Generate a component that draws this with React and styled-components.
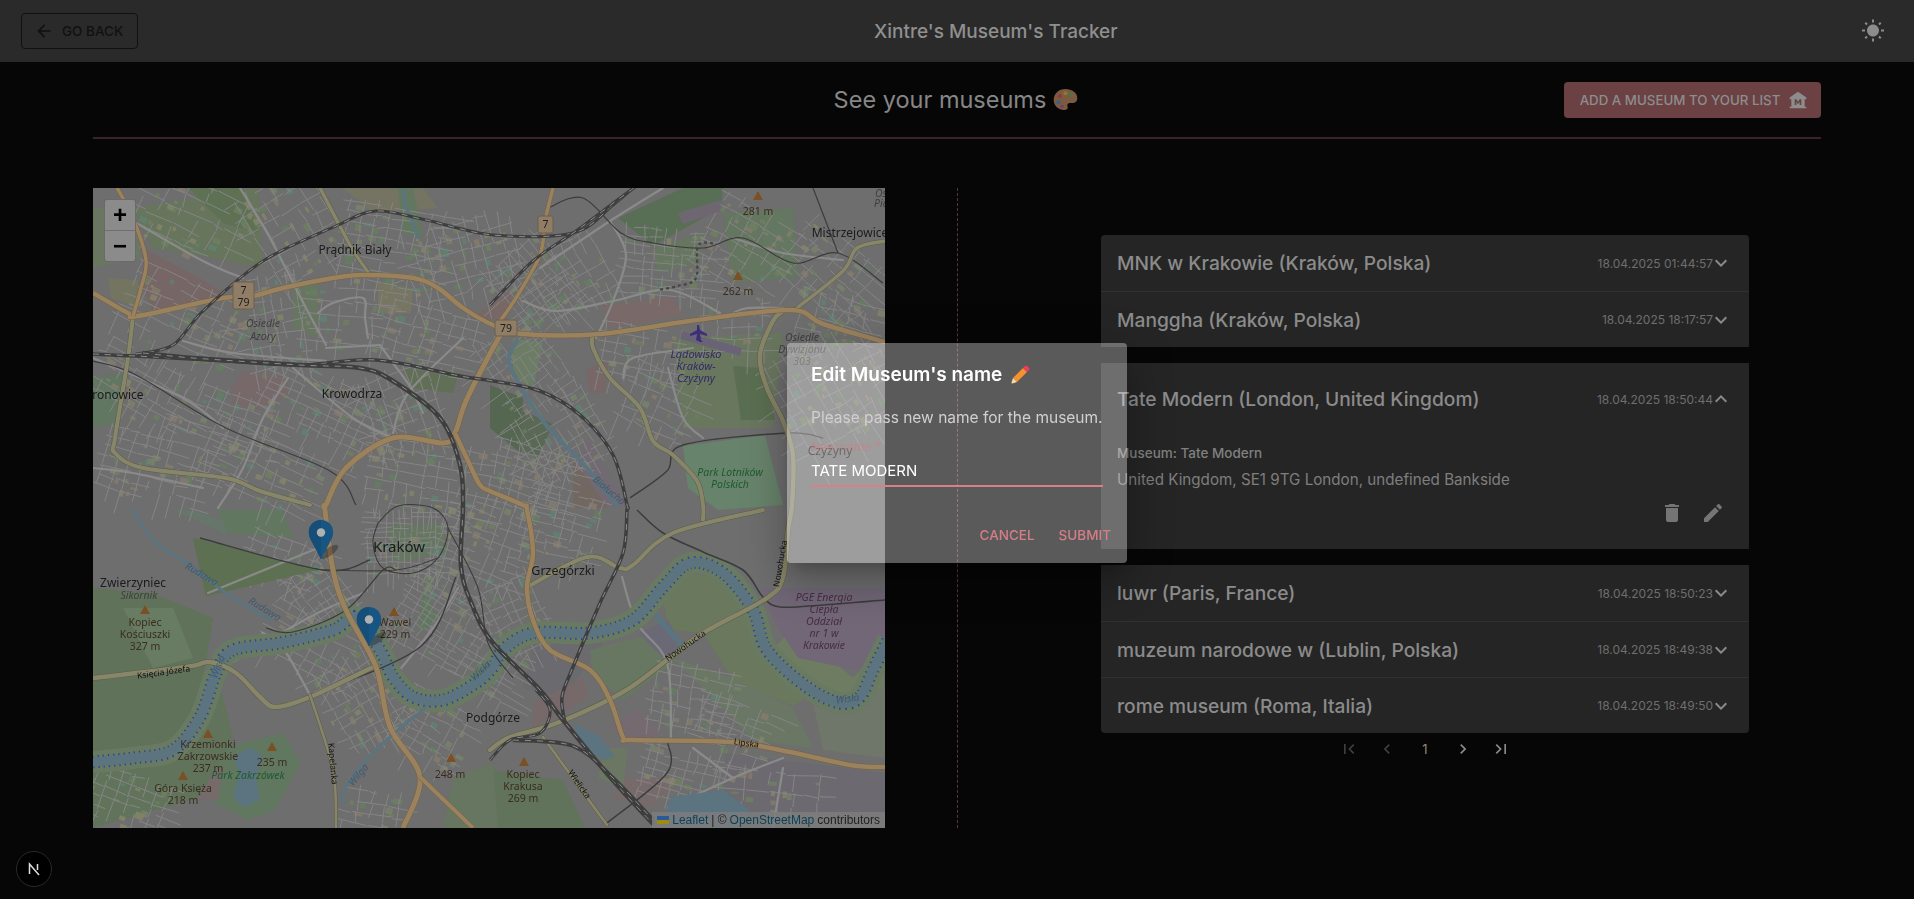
import { useMemo } from "react";
import styled, { createGlobalStyle } from "styled-components";

const GlobalStyle = createGlobalStyle`
  html, body {
    margin: 0;
    padding: 0;
    height: 100%;
    background: #060606;
    overflow: hidden;
    font-family: Inter, "Liberation Sans", sans-serif;
  }
`;

const Page = styled.div`
  width: 1914px;
  height: 899px;
  background: #060606;
`;

const TopBar = styled.header`
  height: 62px;
  background: #2a2a2a;
  display: grid;
  grid-template-columns: 853px auto 1fr;
  align-items: center;
  padding: 0 21px;
`;

const BackButton = styled.button`
  justify-self: start;
  width: 117px;
  height: 36px;
  display: flex;
  align-items: center;
  gap: 8px;
  padding: 0 0 0 12px;
  box-sizing: border-box;
  background: transparent;
  border: 1px solid #111;
  border-radius: 4px;
  color: #111;
  font: 500 13.5px Inter, sans-serif;
`;

const AppTitle = styled.div`
  font-size: 19px;
  font-weight: 500;
  color: #8f8f8f;
`;

const ThemeToggle = styled.div`
  justify-self: end;
  margin-right: 8px;
  display: flex;
  color: #8c8c8c;
`;

const Main = styled.main`
  padding: 0 93px;
`;

const HeadRow = styled.div`
  height: 77px;
  box-sizing: border-box;
  border-bottom: 2px solid #3b2427;
  display: grid;
  grid-template-columns: 1fr auto 1fr;
  align-items: center;
`;

const Heading = styled.h1`
  margin: 0 0 0 -2px;
  display: flex;
  align-items: center;
  gap: 7px;
  font-size: 23.5px;
  font-weight: 400;
  color: #868686;
`;

const AddButton = styled.button`
  justify-self: end;
  width: 257px;
  height: 36px;
  margin-top: 1px;
  display: flex;
  align-items: center;
  justify-content: center;
  gap: 8px;
  border: 0;
  border-radius: 4px;
  background: #6b4144;
  color: #8d8d8d;
  font: 500 13.3px Inter, sans-serif;
  padding: 0 0 0 3px;
`;

const Content = styled.section`
  display: flex;
  margin-top: 49px;
`;

const MapFrame = styled.div`
  position: relative;
  width: 792px;
  height: 640px;
  overflow: hidden;
  background: #6e6e6e;
  flex: none;
`;

const MapSvg = styled.svg`
  display: block;
`;

const ZoomBox = styled.div`
  position: absolute;
  left: 12px;
  top: 12px;
  width: 30px;
  border-radius: 2px;
  overflow: hidden;
  background: #8b8b8b;
  box-shadow: 0 0 0 1px #6a6a6a;
`;

const ZoomBtn = styled.div`
  height: 30px;
  display: flex;
  align-items: center;
  justify-content: center;
  font: 700 24px "Liberation Sans", sans-serif;
  color: #000;
  & + & {
    border-top: 1px solid #6f6f6f;
  }
`;

const Attribution = styled.div`
  position: absolute;
  right: 0;
  bottom: 0;
  height: 16px;
  display: flex;
  align-items: center;
  gap: 3px;
  padding: 0 5px;
  background: rgba(125, 125, 125, 0.85);
  font: 12px "Liberation Sans", sans-serif;
  color: #222;
  white-space: nowrap;
`;

const AttrLink = styled.span`
  color: #0c4258;
`;

const Pin = styled.svg`
  position: absolute;
  left: ${(p) => p.$x - 13}px;
  top: ${(p) => p.$y}px;
  overflow: visible;
`;

const Rule = styled.div`
  width: 0;
  height: 640px;
  margin-left: 72px;
  border-left: 1px dashed #5a343a;
  flex: none;
`;

const ListPanel = styled.div`
  width: 648px;
  margin-left: 143px;
  padding-top: 47px;
  flex: none;
`;

const Group = styled.div`
  background: #252525;
  border-radius: ${(p) => p.$radius};
  & + & {
    margin-top: 16px;
  }
`;

const Row = styled.div`
  height: 56px;
  box-sizing: border-box;
  display: flex;
  align-items: center;
  justify-content: space-between;
  padding: 0 16px;
  & + & {
    border-top: 1px solid #313131;
  }
`;

const OpenRow = styled(Row)`
  height: 72px;
`;

const RowTitle = styled.div`
  font-size: 19.2px;
  font-weight: 500;
  color: #8b8b8b;
`;

const RowMeta = styled.div`
  display: flex;
  align-items: center;
  font-size: 12px;
  color: #6e6e6e;
`;

const Chevron = styled.svg`
  color: #8a8a8a;
  margin-left: -4px;
`;

const Details = styled.div`
  padding: 8px 16px 0;
  height: 114px;
  box-sizing: border-box;
`;

const MuseumName = styled.div`
  font-size: 13.5px;
  line-height: 20px;
  font-weight: 500;
  color: #808080;
`;

const Address = styled.div`
  margin-top: 5px;
  font-size: 15.2px;
  line-height: 24px;
  color: #7e7e7e;
`;

const Actions = styled.div`
  display: flex;
  justify-content: flex-end;
  gap: 17px;
  margin-top: 9px;
  margin-right: 8px;
  color: #757575;
`;

const Pager = styled.nav`
  display: flex;
  justify-content: center;
  height: 32px;
`;

const PageItem = styled.div`
  width: 32px;
  height: 32px;
  margin: 0 3px;
  display: flex;
  align-items: center;
  justify-content: center;
  color: ${(p) => p.$color};
  font-size: 13px;
`;

const DevBadge = styled.div`
  position: fixed;
  left: 16px;
  top: 851px;
  width: 36px;
  height: 36px;
  box-sizing: border-box;
  border-radius: 50%;
  background: #000;
  border: 1px solid #2a2a2a;
  display: flex;
  align-items: center;
  justify-content: center;
`;

const DialogLayer = styled.div`
  position: fixed;
  inset: 7px 0 0 0;
  display: flex;
  align-items: center;
  justify-content: center;
`;

const Dialog = styled.div`
  width: 340px;
  height: 220px;
  box-sizing: border-box;
  padding: 16px 24px 0;
  border-radius: 4px;
  background: rgba(245, 240, 242, 0.36);
  box-shadow: 0 11px 15px -7px rgba(0, 0, 0, 0.2), 0 24px 38px 3px rgba(0, 0, 0, 0.14),
    0 9px 46px 8px rgba(0, 0, 0, 0.12);
`;

const DialogTitle = styled.h2`
  margin: 0;
  display: flex;
  align-items: center;
  gap: 7px;
  font-size: 19px;
  line-height: 32px;
  font-weight: 600;
  color: #fff;
`;

const DialogText = styled.p`
  margin: 15px 0 0;
  font-size: 15.5px;
  line-height: 24px;
  color: #d2cfd0;
  white-space: nowrap;
`;

const Field = styled.div`
  margin-top: 10px;
  height: 47px;
  box-sizing: border-box;
  border-bottom: 2px solid #d8808a;
`;

const FieldLabel = styled.div`
  font-size: 12px;
  line-height: 14px;
  color: rgba(214, 120, 130, 0.55);
`;

const FieldValue = styled.div`
  margin-top: 6px;
  font-size: 15px;
  line-height: 22px;
  color: #fff;
`;

const DialogActions = styled.div`
  display: flex;
  justify-content: flex-end;
  gap: 8px;
  margin: 30px -16px 0 0;
`;

const TextButton = styled.button`
  background: none;
  border: 0;
  padding: 0 8px;
  height: 36px;
  color: #d47f88;
  font: 500 13.5px Inter, sans-serif;
`;

const Icon = ({ d, size = 24, as: Comp = "svg" }) => (
  <Comp width={size} height={size} viewBox="0 0 24 24" fill="currentColor">
    <path d={d} />
  </Comp>
);

const ICONS = {
  back: "M20 11H7.83l5.59-5.59L12 4l-8 8 8 8 1.41-1.41L7.83 13H20v-2z",
  sun: "M6.76 4.84l-1.8-1.79-1.41 1.41 1.79 1.79 1.42-1.41zM4 10.5H1v2h3v-2zm9-9.95h-2V3.5h2V.55zm7.45 3.91l-1.41-1.41-1.79 1.79 1.41 1.41 1.79-1.79zm-3.21 13.7l1.79 1.8 1.41-1.41-1.8-1.79-1.4 1.4zM20 10.5v2h3v-2h-3zm-8-5c-3.31 0-6 2.69-6 6s2.69 6 6 6 6-2.69 6-6-2.69-6-6-6zm-1 16.95h2V19.5h-2v2.95zm-7.45-3.91l1.41 1.41 1.79-1.8-1.41-1.41-1.79 1.8z",
  museum: "M22 11V9L12 2 2 9v2h2v9H2v2h20v-2h-2v-9h2zm-6 7h-2v-4l-2 3-2-3v4H8v-7h2l2 3 2-3h2v7z",
  more: "M16.59 8.59 12 13.17 7.41 8.59 6 10l6 6 6-6z",
  less: "m12 8-6 6 1.41 1.41L12 10.83l4.59 4.58L18 14z",
  trash: "M6 19c0 1.1.9 2 2 2h8c1.1 0 2-.9 2-2V7H6v12zM19 4h-3.5l-1-1h-5l-1 1H5v2h14V4z",
  edit: "M3 17.25V21h3.75L17.81 9.94l-3.75-3.75L3 17.25zM20.71 7.04c.39-.39.39-1.02 0-1.41l-2.34-2.34c-.39-.39-1.02-.39-1.41 0l-1.83 1.83 3.75 3.75 1.83-1.83z",
  first: "M18.41 16.59 13.82 12l4.59-4.59L17 6l-6 6 6 6zM6 6h2v12H6z",
  prev: "M15.41 7.41 14 6l-6 6 6 6 1.41-1.41L10.83 12z",
  next: "M10 6 8.59 7.41 13.17 12l-4.58 4.59L10 18l6-6z",
  last: "M5.59 7.41 10.18 12l-4.59 4.59L7 18l6-6-6-6zM16 6h2v12h-2z",
};

// map data, all in map-local pixels (792 x 640)
const AREAS = [
  ["#66775a", "40,20 165,0 170,80 120,70 60,60"],
  ["#5c7250", "95,0 150,0 165,45 130,35"],
  ["#7a6565", "50,60 110,92 132,106 60,125 50,100"],
  ["#75775f", "15,90 45,92 42,118 18,110"],
  ["#687a5e", "0,20 40,20 48,70 0,80"],
  ["#777560", "250,0 330,0 345,20 280,25"],
  ["#5f7a5c", "305,0 320,0 330,50 310,45"],
  ["#7a6868", "138,200 150,182 192,188 197,205 170,222 140,216"],
  ["#5f7052", "310,180 365,188 360,205 318,200"],
  ["#66795e", "200,100 225,95 225,150 200,140"],
  ["#787860", "285,95 320,100 318,125 285,125"],
  ["#5f7a60", "0,190 30,185 25,235 0,240"],
  ["#55704f", "525,30 590,0 630,0 628,20 560,58"],
  ["#6f6674", "585,25 628,12 632,22 590,36"],
  ["#62795c", "630,25 700,20 705,90 640,95"],
  ["#65795d", "560,60 610,45 605,75 565,85"],
  ["#4f654a", "397,197 430,210 428,265 397,240"],
  ["#56694f", "428,222 460,236 445,270 430,262"],
  ["#736a74", "495,250 525,300 534,318 490,320 482,275"],
  ["#7c6868", "510,118 580,108 590,128 515,140"],
  ["#7a6666", "493,182 515,172 512,205 497,204"],
  ["#6a7a5c", "580,150 690,145 680,240 590,240"],
  ["#56704b", "640,178 670,180 682,232 648,232"],
  ["#67896b", "590,258 672,247 690,317 625,322 595,300"],
  ["#7a6666", "380,130 420,100 412,132"],
  ["#6d8063", "420,150 450,155 440,200 420,190"],
  ["#5f7357", "0,400 60,405 120,430 110,490 95,555 0,565"],
  ["#668060", "30,420 80,420 100,470 60,480"],
  ["#5a6e4e", "100,350 225,382 113,408"],
  ["#65786a", "80,322 100,322 165,345 130,345"],
  ["#5f7a5c", "120,562 190,545 208,575 182,622 155,632 122,616"],
  ["#7a6a6a", "88,590 130,580 125,612 100,610"],
  ["#607a5c", "125,322 190,322 200,350 135,345"],
  ["#64795e", "295,338 350,335 355,365 300,375"],
  ["#5f7a5c", "330,400 345,430 325,445"],
  ["#5f7657", "0,575 80,570 100,540 125,490 140,550 105,610 0,640"],
  ["#6a7c5a", "570,408 597,385 632,392 658,432 672,470 722,505 700,518 640,492 610,445 575,442"],
  ["#6e8060", "672,470 700,440 760,490 790,460 792,520 740,530"],
  ["#72667a", "668,400 792,400 792,458 764,482 705,470 684,438"],
  ["#6b6a70", "440,455 510,455 470,510 430,500"],
  ["#677a60", "497,462 562,445 582,475 530,512 500,485"],
  ["#6c687a", "545,445 575,432 590,458 570,470"],
  ["#6a7a64", "580,470 640,490 700,520 720,560 660,552 610,500"],
  ["#5f7557", "397,582 470,592 492,640 397,640"],
  ["#6c6970", "632,565 792,585 792,640 630,640"],
  ["#70786a", "720,515 792,500 792,570 730,562"],
  ["#7a6a6a", "530,590 590,590 560,620 520,610"],
  ["#7a6868", "440,515 490,490 495,510 440,540"],
  ["#6b7a60", "510,560 535,560 530,600 505,590"],
  ["#776a70", "515,540 545,520 570,545 540,555"],
  ["#66795e", "360,590 400,575 405,640 350,640"],
  ["#74665f", "480,270 515,320 480,320"],
];

const DISTRICTS = [
  // cx, cy, w, h, angle, gap
  [100, 30, 110, 70, 25, 16],
  [200, 40, 100, 80, 60, 13],
  [300, 60, 100, 80, 10, 11],
  [370, 70, 70, 110, 75, 11],
  [90, 130, 120, 70, 25, 12],
  [180, 140, 100, 60, 80, 9],
  [250, 130, 80, 60, 5, 14],
  [330, 150, 100, 60, 15, 10],
  [50, 200, 100, 60, 30, 9],
  [130, 230, 110, 50, 20, 10],
  [230, 220, 120, 60, 25, 9],
  [310, 220, 70, 70, 70, 10],
  [60, 280, 100, 60, 15, 10],
  [170, 280, 120, 60, 25, 10],
  [330, 290, 110, 70, 10, 11],
  [440, 100, 80, 70, 50, 8],
  [480, 90, 70, 70, 60, 10],
  [570, 75, 80, 65, 5, 8],
  [650, 60, 80, 80, 30, 13],
  [735, 85, 90, 70, 40, 11],
  [430, 180, 80, 70, 55, 8],
  [470, 250, 70, 80, 60, 8],
  [550, 165, 80, 50, 10, 10],
  [570, 215, 70, 60, 25, 12],
  [640, 140, 60, 50, 0, 12],
  [745, 135, 80, 50, 15, 13],
  [740, 200, 100, 120, 60, 11],
  [440, 290, 80, 60, 15, 8],
  [310, 355, 70, 60, 0, 5],
  [190, 372, 70, 40, 20, 10],
  [230, 410, 70, 50, 55, 8],
  [215, 455, 90, 50, 30, 10],
  [270, 510, 80, 80, 60, 9],
  [340, 430, 70, 80, 30, 6],
  [390, 350, 80, 80, 20, 8],
  [420, 430, 70, 60, 65, 8],
  [470, 340, 70, 70, 15, 9],
  [400, 480, 60, 50, 30, 7],
  [600, 510, 80, 60, 10, 10],
  [640, 540, 70, 50, 20, 9],
  [590, 590, 80, 50, 15, 8],
  [340, 540, 70, 60, 30, 10],
  [680, 610, 110, 50, 5, 20],
  [30, 610, 90, 50, 20, 10],
  [280, 625, 60, 40, 10, 11],
];

const smooth = (str) => {
  const p = str.split(" ").map((s) => s.split(",").map(Number));
  let d = `M${p[0][0]} ${p[0][1]}`;
  for (let i = 0; i < p.length - 1; i++) {
    const a = p[Math.max(i - 1, 0)];
    const b = p[i];
    const c = p[i + 1];
    const e = p[Math.min(i + 2, p.length - 1)];
    const c1 = [b[0] + (c[0] - a[0]) / 6, b[1] + (c[1] - a[1]) / 6];
    const c2 = [c[0] - (e[0] - b[0]) / 6, c[1] - (e[1] - b[1]) / 6];
    d += `C${c1[0].toFixed(1)} ${c1[1].toFixed(1)} ${c2[0].toFixed(1)} ${c2[1].toFixed(1)} ${c[0]} ${c[1]}`;
  }
  return d;
};

const WATER = [
  ["0,574 40,570 80,562 107,529 123,485 140,462 187,455 240,442 263,429 287,462 300,489 320,509 350,512 383,495 400,479 410,462 440,445 497,445 540,432 570,399 597,375 630,385 660,422 674,462 714,499 747,515 767,509 780,482 795,452", 9],
  ["40,322 60,352 93,375 133,405 177,432", 3],
  ["424,153 417,177 450,233 494,280 524,317", 4],
  ["333,519 283,562 253,599 250,615", 3],
  ["564,429 587,455", 6],
  ["310,0 312,15 318,30 325,50", 3],
];

const LAKES = [
  "140,569 157,559 170,569 163,589 167,612 150,619 140,609 147,585",
  "480,535 507,549 522,569 510,572 490,560",
  "577,609 630,602 657,622 640,640 570,640",
];

const STREETS = [
  "147,0 177,50 213,120 233,157",
  "40,33 110,73 150,90",
  "225,125 240,115 270,110 272,130 275,150",
  "233,160 287,157",
  "90,153 140,165 233,173",
  "287,157 300,175 318,200 330,225",
  "517,33 533,67 520,113 503,150",
  "430,113 463,123 520,113 577,102 627,125",
  "570,0 517,33 447,80",
  "529,389 544,435 574,475 578,549",
  "0,280 40,285 110,300",
  "195,190 170,230 150,280 125,320",
  "200,180 260,230 300,250",
  "370,150 315,205 300,245",
  "115,405 230,358",
  "0,170 90,210 130,240",
  "130,480 215,430 270,405",
  "217,507 190,460 170,445",
  "300,490 340,440 365,400",
  "640,125 655,120 690,120",
  "530,190 540,170 600,160",
  "610,250 590,230 575,180",
  "640,50 690,65 750,72",
  "575,620 640,590 690,570",
  "690,580 680,640",
  "600,560 640,590",
];

const OLIVE = [
  ["227,0 257,57 277,87", 3.5],
  ["40,128 35,170 22,250 22,265 50,280 133,290 167,303 217,317", 4],
  ["500,146 500,160 517,190 547,220 560,253 580,267 604,293 610,317 610,332", 4],
  ["690,123 680,133 667,167 674,200 690,233 700,267 699,317 695,342 690,389 674,410 610,445 574,472 530,504 464,535 417,549 397,562", 4.5],
  ["792,53 764,60 750,83 704,120", 3.5],
  ["434,399 494,369 527,380 540,377 580,345 670,322", 4],
  ["0,490 93,479 117,474 143,485 167,509 183,519 217,509 280,479", 4.5],
  ["217,507 240,582 243,639", 2.5],
  ["450,549 474,582 514,637", 2.5],
];

const TAN = [
  ["0,105 35,125 45,128 130,110 160,108 190,100 240,90 270,87 320,90 345,100 370,120 400,137 430,146 507,146 597,133 697,122 730,136 795,155", 4.5],
  ["24,0 40,30 53,72 48,100 40,128", 3.5],
  ["460,0 452,33 447,67 423,110 407,133", 3.5],
  ["412,140 400,160 373,213 362,245 350,255 300,250 253,280 233,317 232,322 240,382 253,422 283,479 297,539 327,589 310,640", 5],
  ["327,589 380,640", 4],
  ["362,245 377,277 387,297 397,303 430,317 434,322 440,365 434,399 440,432 457,462 497,482 517,512 530,549 540,552 637,554 697,564 757,577 795,579", 4.5],
];

const RAILS = [
  ["0,166 43,168 133,173 207,177 283,172 367,188 400,193 447,203 487,227 520,267 534,317 534,322 530,365 507,415 480,479 469,509 472,535", 3.5],
  ["43,166 80,157 110,123 170,73 243,38 283,23 333,32 400,47 480,45 520,17 540,0", 3],
  ["397,117 440,73 483,43 523,13 545,-3", 3],
  ["50,165 100,170 207,177 267,180 300,193 347,230 367,277 370,317 368,379 380,419 400,455 447,502 470,532 517,589 560,636", 4.5],
  ["397,572 417,552 447,545 457,522 443,502", 3],
  ["420,552 480,558 520,590 560,632", 4],
];

const THIN = [
  ["544,322 570,345 610,364 650,382 670,409 687,419 730,417 792,412", 1.6],
  ["107,350 230,382 277,372", 1.4],
  ["173,440 200,444 253,422 290,382 303,382", 1.2],
  ["217,507 327,459 363,389", 1.4],
  ["0,173 43,187 133,240 237,283 263,317", 1.2],
  ["285,335 305,318 340,320 355,340 345,370 320,385 290,380 280,355 285,335", 1.1],
  ["574,552 574,585 514,635", 1.4],
  ["537,310 574,283 590,257 694,245 730,250", 1.4],
  ["455,20 490,10 528,45 560,55 610,60 650,50 700,75 745,65 790,95", 1.2],
  ["720,0 745,65", 1.2],
  ["355,340 385,400 395,455 420,490", 1.1],
  ["230,382 303,382 345,370", 1],
];

const TRIANGLES = [
  [665, 8], [645, 88], [52, 422], [115, 546], [179, 559], [90, 588], [301, 424], [358, 570], [431, 574],
];

const LABELS = [
  ["Prądnik Biały", 262, 66, 12],
  ["Bronowice", 21, 211, 12],
  ["Krowodrza", 259, 210, 12],
  ["Mistrzejowice", 757, 49, 12],
  ["Czyżyny", 737, 267, 12],
  ["Grzegórzki", 470, 387, 12.5],
  ["Kraków", 306, 364, 15],
  ["Podgórze", 400, 534, 12],
  ["Zwierzyniec", 40, 399, 12],
  ["Osiedle", 170, 139, 10.5, "#3f3f3f", true],
  ["Azory", 170, 152, 10.5, "#3f3f3f", true],
  ["Osiedle", 709, 153, 10.5, "#3f3f3f", true],
  ["Dywizjonu", 709, 165, 10.5, "#3f3f3f", true],
  ["303", 709, 177, 10.5, "#3f3f3f", true],
  ["Osiedle", 799, 9, 10.5, "#3f3f3f", true],
  ["Piastów", 799, 19, 10.5, "#3f3f3f", true],
  ["Sikornik", 46, 411, 10.5, "#3f3f3f", true],
  ["Lądowisko", 603, 170, 11, "#352a66", true],
  ["Kraków-", 603, 182, 11, "#352a66", true],
  ["Czyżyny", 603, 194, 11, "#352a66", true],
  ["Park Lotników", 637, 288, 10.5, "#1c5a2e", true],
  ["Polskich", 637, 300, 10.5, "#1c5a2e", true],
  ["Park Zakrzówek", 155, 591, 10.5, "#1c5a2e", true],
  ["PGE Energia", 731, 413, 10.5, "#4a2b45", true],
  ["Ciepła", 731, 425, 10.5, "#4a2b45", true],
  ["Oddział", 731, 437, 10.5, "#4a2b45", true],
  ["nr 1 w", 731, 449, 10.5, "#4a2b45", true],
  ["Krakowie", 731, 461, 10.5, "#4a2b45", true],
  ["281 m", 665, 27, 10.5, "#3a2c1e"],
  ["262 m", 645, 107, 10.5, "#3a2c1e"],
  ["Kopiec", 52, 438, 10.5, "#3a2c1e"],
  ["Kościuszki", 52, 450, 10.5, "#3a2c1e"],
  ["327 m", 52, 462, 10.5, "#3a2c1e"],
  ["Krzemionki", 115, 560, 10.5, "#3a2c1e"],
  ["Zakrzowskie", 115, 572, 10.5, "#3a2c1e"],
  ["237 m", 115, 584, 10.5, "#3a2c1e"],
  ["235 m", 179, 578, 10.5, "#3a2c1e"],
  ["Góra Księża", 90, 604, 10.5, "#3a2c1e"],
  ["218 m", 90, 616, 10.5, "#3a2c1e"],
  ["Wawel", 302, 438, 10.5, "#3a2c1e"],
  ["229 m", 302, 450, 10.5, "#3a2c1e"],
  ["248 m", 357, 590, 10.5, "#3a2c1e"],
  ["Kopiec", 430, 590, 10.5, "#3a2c1e"],
  ["Krakusa", 430, 602, 10.5, "#3a2c1e"],
  ["269 m", 430, 614, 10.5, "#3a2c1e"],
  ["Białucha", 514, 305, 10, "#3f5a70", true, 40],
  ["Rudawa", 107, 389, 10, "#3f5a70", true, 30],
  ["Rudawa", 170, 424, 10, "#3f5a70", true, 32],
  ["Wisła", 128, 480, 10, "#3f5a70", true, -68],
  ["Wisła", 390, 485, 10, "#3f5a70", true, -45],
  ["Wisła", 755, 514, 10, "#3f5a70", true, -8],
  ["Wilga", 268, 589, 10, "#3f5a70", true, -50],
  ["Księcia Józefa", 71, 487, 8.5, "#111", false, -8],
  ["Kapelanka", 237, 576, 8.5, "#111", false, 85],
  ["Nowohucka", 594, 460, 8.5, "#111", false, -35],
  ["Nowohucka", 690, 376, 8.5, "#111", false, -80],
  ["Lipska", 653, 558, 8.5, "#111", false, 8],
  ["Wielicka", 484, 598, 8.5, "#111", false, 55],
];

const SHIELDS = [
  [140, 94, 21, 27, ["7", "79"]],
  [445, 28, 15, 17, ["7"]],
  [402, 132, 22, 16, ["79"]],
];

const MapText = styled.text`
  font-family: "Noto Sans", "Open Sans", sans-serif;
  font-size: ${(p) => p.$size}px;
  font-style: ${(p) => (p.$italic ? "italic" : "normal")};
  fill: ${(p) => p.$fill};
  text-anchor: middle;
`;

const rng = (seed) => () => {
  seed = (seed * 16807) % 2147483647;
  return seed / 2147483647;
};

function useCityTexture() {
  return useMemo(() => {
    const r = rng(4711);
    let streets = "";
    const patches = [];
    const colors = ["#86866a", "#6f8160", "#5f8272", "#78846a", "#867c6c", "#648060"];
    DISTRICTS.forEach(([cx, cy, w, h, ang, gap]) => {
      const a = (ang * Math.PI) / 180;
      const pt = (u, v) =>
        `${(cx + u * Math.cos(a) - v * Math.sin(a)).toFixed(1)} ${(cy + u * Math.sin(a) + v * Math.cos(a)).toFixed(1)}`;
      for (let v = -h / 2; v <= h / 2; v += gap) {
        let u = -w / 2 - r() * 8;
        while (u < w / 2) {
          const len = 8 + r() * 26;
          if (r() > 0.18) {
            streets += `M${pt(u, v + (r() - 0.5) * 3)}L${pt(u + len, v + (r() - 0.5) * 3)}`;
          }
          u += len + 1;
        }
      }
      for (let u = -w / 2; u <= w / 2; u += gap * 1.25) {
        let v = -h / 2 - r() * 6;
        while (v < h / 2) {
          const len = 8 + r() * 22;
          if (r() > 0.25) {
            streets += `M${pt(u + (r() - 0.5) * 3, v)}L${pt(u + (r() - 0.5) * 3, v + len)}`;
          }
          v += len + 1;
        }
      }
      const n = Math.round((w * h) / 300);
      for (let i = 0; i < n; i++) {
        const u = (r() - 0.5) * w;
        const v = (r() - 0.5) * h;
        patches.push({
          k: patches.length,
          x: cx + u * Math.cos(a) - v * Math.sin(a),
          y: cy + u * Math.sin(a) + v * Math.cos(a),
          w: 3 + r() * 6,
          h: 2 + r() * 5,
          ang,
          fill: colors[Math.floor(r() * colors.length)],
        });
      }
    });
    return { streets, patches };
  }, []);
}

function CityMap() {
  const { streets, patches } = useCityTexture();
  return (
    <MapSvg width="792" height="640" viewBox="0 0 792 640">
      <rect width="792" height="640" fill="#6e6e6e" />
      <g opacity="0.8">
        {AREAS.map(([fill, pts], i) => (
          <polygon key={i} points={pts} fill={fill} />
        ))}
      </g>
      <g opacity="0.8">
        {patches.map((p) => (
          <rect
            key={p.k}
            x={p.x}
            y={p.y}
            width={p.w}
            height={p.h}
            fill={p.fill}
            transform={`rotate(${p.ang} ${p.x} ${p.y})`}
          />
        ))}
      </g>
      <path d={streets} stroke="#858585" strokeWidth="1" fill="none" />
      <polygon points="100,350 225,382 113,408" fill="#5e7052" />
      {STREETS.map((s, i) => (
        <path key={i} d={smooth(s)} stroke="#8a8a8a" strokeWidth="2.2" fill="none" strokeLinecap="round" />
      ))}
      <path d={smooth(WATER[0][0])} stroke="#687a62" strokeWidth="22" fill="none" />
      <path d={smooth(WATER[0][0])} stroke="#2c3f9e" strokeWidth="13" strokeDasharray="1.2 4" fill="none" />
      {LAKES.map((pts, i) => (
        <polygon key={i} points={pts} fill="#5b7480" />
      ))}
      {WATER.map(([s, w], i) => (
        <path key={i} d={smooth(s)} stroke="#5b7480" strokeWidth={w} fill="none" strokeLinecap="round" />
      ))}
      <polygon points="589,143 649,160 647,168 587,151" fill="#6a6377" />
      {THIN.map(([s, w], i) => (
        <path key={i} d={smooth(s)} stroke="#3c3c3c" strokeWidth={w} fill="none" />
      ))}
      {OLIVE.map(([s, w], i) => (
        <g key={i} fill="none" strokeLinecap="round">
          <path d={smooth(s)} stroke="#5d5c46" strokeWidth={w + 1} />
          <path d={smooth(s)} stroke="#87866a" strokeWidth={w} />
        </g>
      ))}
      {TAN.map(([s, w], i) => (
        <g key={i} fill="none">
          <path d={smooth(s)} stroke="#75603f" strokeWidth={w + 1} />
          <path d={smooth(s)} stroke="#9a825f" strokeWidth={w} />
        </g>
      ))}
      {RAILS.map(([s, w], i) => (
        <g key={i} fill="none">
          <path d={smooth(s)} stroke="#3e3e3e" strokeWidth={w} />
          <path d={smooth(s)} stroke="#8c8c8c" strokeWidth="1" strokeDasharray="6 6" />
        </g>
      ))}
      <path d={smooth("620,55 605,58 603,90 585,98 565,102")} stroke="#454545" strokeWidth="2.2" strokeDasharray="3 3" fill="none" />
      <path d="M603 152 l1 -6 l-7 2 l0 -2 l7 -4 l0 -5 l2 0 l1 5 l7 4 l0 2 l-7 -2 l1 6 l2 2 l-3 0 z" fill="#3c2e78" />
      {TRIANGLES.map(([x, y], i) => (
        <polygon key={i} points={`${x},${y - 5} ${x + 5},${y + 4} ${x - 5},${y + 4}`} fill="#7c4f24" />
      ))}
      {SHIELDS.map(([x, y, w, h, lines], i) => (
        <g key={i}>
          <rect x={x} y={y} width={w} height={h} rx="2" fill="#8f7d66" stroke="#6e5f4b" />
          {lines.map((t, j) => (
            <MapText key={t} x={x + w / 2} y={y + 12 + j * 12} $size={10.5} $fill="#1e1e1e">
              {t}
            </MapText>
          ))}
        </g>
      ))}
      {LABELS.map(([t, x, y, size, fill = "#1b1b1b", italic, rot], i) => (
        <MapText
          key={i}
          x={x}
          y={y}
          $size={size}
          $fill={fill}
          $italic={italic}
          transform={rot ? `rotate(${rot} ${x} ${y})` : undefined}
        >
          {t}
        </MapText>
      ))}
    </MapSvg>
  );
}

const Marker = ({ x, y }) => (
  <Pin $x={x} $y={y} width="26" height="39" viewBox="0 0 26 39">
    <ellipse cx="21" cy="32" rx="11" ry="4" fill="#000" opacity="0.28" transform="rotate(-35 21 32)" />
    <path d="M13 0C6 0 .8 5.4.8 12c0 3 .8 5.6 2.4 8.6L13 39l9.8-18.4c1.6-3 2.4-5.6 2.4-8.6C25.200 5.400 20 0 13 0z" fill="#175683" />
    <path d="M13 39 3.200 20.600C1.600 17.600.8 15 .8 12 .8 5.400 6 0 13 0z" fill="#154e79" />
    <circle cx="13" cy="12.500" r="4.200" fill="#b0b0b0" />
  </Pin>
);

const Palette = () => (
  <svg width="25" height="25" viewBox="0 0 36 36">
    <path d="M18 3C8 3 1 10 1 19c0 8 7 14 15 14 4 0 6-2 5-5-1-2 0-5 4-5h4c4 0 6-3 6-7C35 8 27 3 18 3z" fill="#7d5a3f" />
    <circle cx="10" cy="13" r="3" fill="#8a3a48" />
    <circle cx="18" cy="9" r="3" fill="#8a7a3a" />
    <circle cx="26" cy="12" r="3" fill="#3f7a4a" />
    <circle cx="8" cy="22" r="3" fill="#3a5f8a" />
    <circle cx="13" cy="28" r="2.500" fill="#6a3f7a" />
  </svg>
);

const Pencil = () => (
  <svg width="22" height="22" viewBox="0 0 22 22">
    <path d="M4 14 14 4l4 4L8 18z" fill="#f5922f" />
    <path d="M4 14l4 4-6 2z" fill="#f7d9a8" />
    <path d="M2.500 18.500 2 20l1.600-.5z" fill="#555" />
    <path d="m14 4 2-2c.7-.7 1.600-.7 2.200 0l1.800 1.800c.7.6.7 1.500 0 2.200l-2 2z" fill="#ea3f62" />
  </svg>
);

const ROWS_TOP = [
  ["MNK w Krakowie (Kraków, Polska)", "18.04.2025 01:44:57"],
  ["Manggha (Kraków, Polska)", "18.04.2025 18:17:57"],
];
const ROWS_BOTTOM = [
  ["luwr (Paris, France)", "18.04.2025 18:50:23"],
  ["muzeum narodowe w (Lublin, Polska)", "18.04.2025 18:49:38"],
  ["rome museum (Roma, Italia)", "18.04.2025 18:49:50"],
];

const MuseumRow = ({ title, date }) => (
  <Row>
    <RowTitle>{title}</RowTitle>
    <RowMeta>
      {date}
      <Icon d={ICONS.more} size={24} as={Chevron} />
    </RowMeta>
  </Row>
);

export default function App() {
  return (
    <Page>
      <GlobalStyle />
      <TopBar>
        <BackButton>
          <Icon d={ICONS.back} size={20} />
          GO BACK
        </BackButton>
        <AppTitle>Xintre's Museum's Tracker</AppTitle>
        <ThemeToggle>
          <Icon d={ICONS.sun} size={24} />
        </ThemeToggle>
      </TopBar>
      <Main>
        <HeadRow>
          <span />
          <Heading>
            See your museums <Palette />
          </Heading>
          <AddButton>
            ADD A MUSEUM TO YOUR LIST
            <Icon d={ICONS.museum} size={20} />
          </AddButton>
        </HeadRow>
        <Content>
          <MapFrame>
            <CityMap />
            <ZoomBox>
              <ZoomBtn>+</ZoomBtn>
              <ZoomBtn>−</ZoomBtn>
            </ZoomBox>
            <Marker x={228} y={332} />
            <Marker x={276} y={419} />
            <Attribution>
              <svg width="12" height="8" viewBox="0 0 12 8">
                <rect width="12" height="4" fill="#2a5a9a" />
                <rect y="4" width="12" height="4" fill="#a08a10" />
              </svg>
              <AttrLink>Leaflet</AttrLink> | © <AttrLink>OpenStreetMap</AttrLink> contributors
            </Attribution>
          </MapFrame>
          <Rule />
          <ListPanel>
            <Group $radius="4px 4px 0 0">
              {ROWS_TOP.map(([t, d]) => (
                <MuseumRow key={t} title={t} date={d} />
              ))}
            </Group>
            <Group $radius="0">
              <OpenRow>
                <RowTitle>Tate Modern (London, United Kingdom)</RowTitle>
                <RowMeta>
                  18.04.2025 18:50:44
                  <Icon d={ICONS.less} size={24} as={Chevron} />
                </RowMeta>
              </OpenRow>
              <Details>
                <MuseumName>Museum: Tate Modern</MuseumName>
                <Address>United Kingdom, SE1 9TG London, undefined Bankside</Address>
                <Actions>
                  <Icon d={ICONS.trash} />
                  <Icon d={ICONS.edit} />
                </Actions>
              </Details>
            </Group>
            <Group $radius="0 0 4px 4px">
              {ROWS_BOTTOM.map(([t, d]) => (
                <MuseumRow key={t} title={t} date={d} />
              ))}
            </Group>
            <Pager>
              <PageItem $color="#3e3e3e"><Icon d={ICONS.first} size={20} /></PageItem>
              <PageItem $color="#3e3e3e"><Icon d={ICONS.prev} size={20} /></PageItem>
              <PageItem $color="#8f8a70">1</PageItem>
              <PageItem $color="#8a8a8a"><Icon d={ICONS.next} size={20} /></PageItem>
              <PageItem $color="#8a8a8a"><Icon d={ICONS.last} size={20} /></PageItem>
            </Pager>
          </ListPanel>
        </Content>
      </Main>
      <DevBadge>
        <svg width="16" height="16" viewBox="0 0 16 16" fill="none" stroke="#ddd" strokeWidth="1.500">
          <path d="M3.500 13V3L13 14" />
          <path d="M11.500 3v6" />
        </svg>
      </DevBadge>
      <DialogLayer>
        <Dialog>
          <DialogTitle>
            Edit Museum's name <Pencil />
          </DialogTitle>
          <DialogText>Please pass new name for the museum.</DialogText>
          <Field>
            <FieldLabel>New name *</FieldLabel>
            <FieldValue>TATE MODERN</FieldValue>
          </Field>
          <DialogActions>
            <TextButton>CANCEL</TextButton>
            <TextButton>SUBMIT</TextButton>
          </DialogActions>
        </Dialog>
      </DialogLayer>
    </Page>
  );
}
